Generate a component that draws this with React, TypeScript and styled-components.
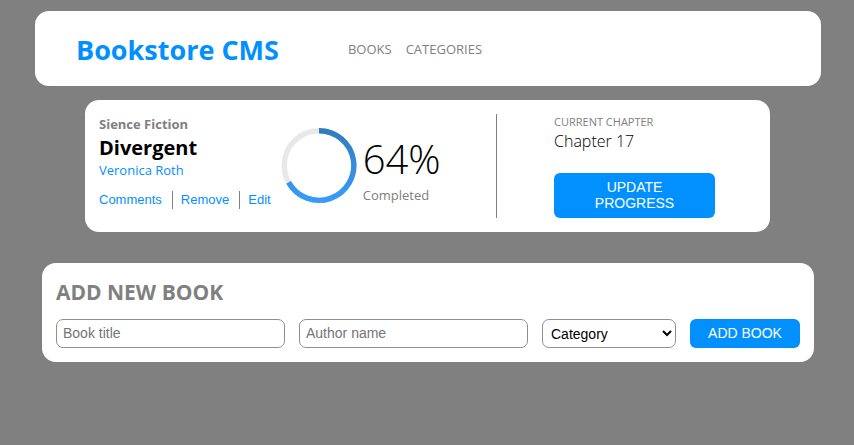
import React from 'react';
import styled, { createGlobalStyle } from 'styled-components';

const blue = '#0290ff';
const gray = '#808080';

const GlobalStyle = createGlobalStyle`
  *, *::before, *::after { box-sizing: border-box; }
  body {
    margin: 0;
    background: ${gray};
    font-family: 'Open Sans', 'Noto Sans', sans-serif;
    color: #000;
  }
  h1, h2, h3, p, ul { margin: 0; padding: 0; }
  button, input, select { font-family: 'Liberation Sans', Arial, sans-serif; }
`;

const Page = styled.div`
  display: flex;
  flex-direction: column;
  padding: 11px 33px 0 35px;
`;

const Panel = styled.div`
  background: #fff;
  border-radius: 14px;
`;

const Header = styled(Panel).attrs({ as: 'header' })`
  display: flex;
  align-items: center;
  gap: 69px;
  min-height: 75px;
  padding: 0 41px;
`;

const Brand = styled.h1`
  padding-top: 2px;
  color: ${blue};
  font-size: 27px;
  line-height: 38px;
  font-weight: 700;
  white-space: nowrap;
`;

const NavList = styled.ul`
  display: flex;
  gap: 14px;
  padding-bottom: 2px;
  list-style: none;
`;

const NavLink = styled.a`
  color: ${gray};
  font-size: 13px;
  line-height: 20px;
  text-decoration: none;
`;

const BookCard = styled(Panel).attrs({ as: 'article' })`
  display: grid;
  grid-template-columns: 397fr 260fr;
  margin: 14px 51px 0 50px;
  padding: 14px;
`;

const Summary = styled.div`
  display: flex;
  gap: 10px;
`;

const Genre = styled.p`
  color: ${gray};
  font-size: 13px;
  line-height: 20px;
  font-weight: 700;
`;

const BookTitle = styled.h2`
  font-size: 20px;
  line-height: 27px;
  font-weight: 700;
`;

const Author = styled.p`
  color: ${blue};
  font-size: 13px;
  line-height: 19px;
`;

const Actions = styled.div`
  display: flex;
  margin-top: 11px;
`;

const ActionButton = styled.button`
  padding: 0 10px 0 8px;
  border: 0;
  border-right: 1px solid ${gray};
  background: none;
  color: ${blue};
  font-size: 13px;
  line-height: 18px;
  cursor: pointer;
  &:first-child { padding-left: 0; }
  &:last-child { padding-right: 0; border-right: 0; }
`;

const Progress = styled.div`
  display: flex;
  align-items: center;
  gap: 6px;
`;

const ProgressText = styled.div`
  padding-top: 3px;
`;

const Percent = styled.p`
  font-size: 40px;
  line-height: 54px;
  font-weight: 300;
`;

const Completed = styled.p`
  color: ${gray};
  font-size: 13px;
  line-height: 18px;
`;

const Chapter = styled.div`
  display: flex;
  flex-direction: column;
  border-left: 1px solid ${gray};
  padding: 0 41px 0 57px;
`;

const ChapterLabel = styled.p`
  color: ${gray};
  font-size: 11px;
  line-height: 16px;
`;

const ChapterName = styled.p`
  font-size: 16px;
  line-height: 23px;
  font-weight: 300;
`;

const PrimaryButton = styled.button`
  border: 0;
  border-radius: 6px;
  background: ${blue};
  color: #fff;
  cursor: pointer;
`;

const UpdateButton = styled(PrimaryButton)`
  margin-top: 20px;
  padding: 6px 40px 7px;
  font-size: 14px;
  line-height: 16px;
`;

const AddSection = styled(Panel).attrs({ as: 'section' })`
  margin: 31px 7px 0;
  padding: 14px;
`;

const AddHeading = styled.h2`
  color: ${gray};
  font-size: 21px;
  line-height: 30px;
  font-weight: 700;
`;

const AddForm = styled.form`
  display: grid;
  grid-template-columns: 1fr 1fr 134px 110px;
  gap: 14px;
  margin-top: 12px;
`;

const TextField = styled.input`
  min-width: 0;
  height: 29px;
  padding: 0 6px 2px;
  border: 1px solid #8f8f8f;
  border-radius: 7px;
  background: #fff;
  font-size: 14px;
  &::placeholder { color: #757575; }
`;

const CategorySelect = styled.select`
  height: 29px;
  padding: 0 4px;
  border: 1px solid #8f8f8f;
  border-radius: 7px;
  background: #fff;
  color: #000;
  font-size: 14px;
`;

const AddButton = styled(PrimaryButton)`
  padding: 0 0 2px;
  font-size: 14px;
`;

function ProgressRing() {
  return (
    <svg width="76" height="76" viewBox="0 0 76 76" role="img" aria-label="Reading progress">
      <defs>
        <linearGradient id="ring" gradientUnits="userSpaceOnUse" x1="38" y1="0" x2="38" y2="76">
          <stop offset="0" stopColor="#307bbe" />
          <stop offset="1" stopColor="#389dfb" />
        </linearGradient>
      </defs>
      <circle cx="38" cy="37.5" r="34.8" fill="none" stroke="#e8e8e8" strokeWidth="5.4" />
      <path
        d="M38 2.7 A34.8 34.8 0 1 1 7.6 54.4"
        fill="none"
        stroke="url(#ring)"
        strokeWidth="5.4"
      />
    </svg>
  );
}

export default function App() {
  return (
    <>
      <GlobalStyle />
      <Page>
        <Header>
          <Brand>Bookstore CMS</Brand>
          <nav>
            <NavList>
              <li><NavLink href="#books">BOOKS</NavLink></li>
              <li><NavLink href="#categories">CATEGORIES</NavLink></li>
            </NavList>
          </nav>
        </Header>
        <BookCard>
          <Summary>
            <div>
              <Genre>Sience Fiction</Genre>
              <BookTitle>Divergent</BookTitle>
              <Author>Veronica Roth</Author>
              <Actions>
                <ActionButton type="button">Comments</ActionButton>
                <ActionButton type="button">Remove</ActionButton>
                <ActionButton type="button">Edit</ActionButton>
              </Actions>
            </div>
            <Progress>
              <ProgressRing />
              <ProgressText>
                <Percent>64%</Percent>
                <Completed>Completed</Completed>
              </ProgressText>
            </Progress>
          </Summary>
          <Chapter>
            <ChapterLabel>CURRENT CHAPTER</ChapterLabel>
            <ChapterName>Chapter 17</ChapterName>
            <UpdateButton type="button">UPDATE PROGRESS</UpdateButton>
          </Chapter>
        </BookCard>
        <AddSection>
          <AddHeading>ADD NEW BOOK</AddHeading>
          <AddForm onSubmit={(event) => event.preventDefault()}>
            <TextField type="text" placeholder="Book title" aria-label="Book title" />
            <TextField type="text" placeholder="Author name" aria-label="Author name" />
            <CategorySelect aria-label="Category" defaultValue="Category">
              <option>Category</option>
            </CategorySelect>
            <AddButton type="submit">ADD BOOK</AddButton>
          </AddForm>
        </AddSection>
      </Page>
    </>
  );
}
